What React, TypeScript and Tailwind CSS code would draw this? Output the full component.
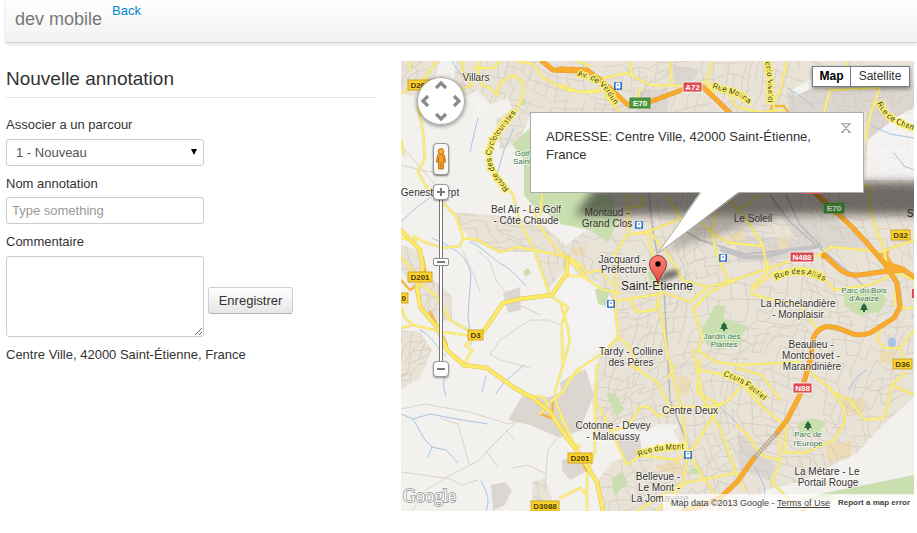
import React from "react";

const SANS = '"Liberation Sans", Arial, sans-serif';

/* ---------- map data ---------- */

// Small residential streets: a warped grid with gaps.
function buildStreets(step: number, seed: number): string {
  let s = seed;
  const rnd = () => {
    s = (s * 16807) % 2147483647;
    return s / 2147483647;
  };
  const pts: number[][][] = [];
  for (let j = 0; j * step < 470; j++) {
    const row: number[][] = [];
    for (let i = 0; i * step < 540; i++) {
      const x = 390 + i * step;
      const y = 50 + j * step;
      row.push([
        x + 14 * Math.sin(y / 37) + 7 * Math.sin(x / 19 + y / 50) + (rnd() - 0.5) * step * 0.7,
        y + 14 * Math.sin(x / 43) + 7 * Math.cos(y / 17 + x / 40) + (rnd() - 0.5) * step * 0.7,
      ]);
    }
    pts.push(row);
  }
  let d = "";
  const seg = (a: number[], b: number[]) => {
    d += `M${a[0].toFixed(1)} ${a[1].toFixed(1)}L${b[0].toFixed(1)} ${b[1].toFixed(1)}`;
  };
  for (let j = 0; j < pts.length - 1; j++) {
    for (let i = 0; i < pts[j].length - 1; i++) {
      if (rnd() < 0.66) seg(pts[j][i], pts[j][i + 1]);
      if (rnd() < 0.66) seg(pts[j][i], pts[j + 1][i]);
    }
  }
  return d;
}

const STREETS = buildStreets(10, 77);

const URBAN = [
  "M456 61L914 61L914 397L880 428L858 452L800 482L765 490L740 511L605 511L598 480L612 462L640 452L660 440L680 425L660 424L640 432L625 420L600 440L592 400L598 360L618 335L612 300L596 282L578 276L560 250L600 220L560 190L530 115L520 140L500 150L496 120L512 108L508 98L490 104L478 90L462 98L454 84Z",
  "M401 245L418 250L426 275L440 285L452 296L452 320L430 322L414 290L401 270Z",
  "M452 212L500 216L540 222L565 245L566 268L548 290L534 252L500 252L470 240Z",
  "M401 61L440 61L432 90L410 96L401 90Z",
  "M401 330L420 332L432 350L420 378L401 390Z",
  "M533 482L545 478L552 500L540 511L532 500Z",
];

const INDUSTRY = [
  "M503 293L520 287L521 310L508 313Z",
  "M508 420L522 396L545 398L570 390L580 400L582 430L560 438L530 425Z",
  "M491 485L505 482L512 490L505 505L493 511Z",
  "M560 382L585 368L594 395L582 425L562 405Z",
  "M612 435L640 438L642 452L627 463Z",
  "M640 91L668 88L668 112L638 112Z",
  "M674 65L700 70L690 86L674 88Z",
  "M786 92L830 90L850 78L914 84L914 108L895 118L868 140L866 112L790 112Z",
  "M780 215L835 218L870 245L850 250L800 244Z",
  "M737 235L800 240L820 255L760 262L737 262Z",
  "M737 430L760 455L776 466L770 480L740 470Z",
  "M562 460L580 455L585 472L570 480L562 470Z",
];

const PARKS = [
  "M512 144L530 128L530 112L560 112L600 205L580 225L560 222L532 205L524 195L524 160Z",
  "M560 195L610 195L618 220L608 242L590 230L560 224Z",
  "M595 289L610 288L606 306L598 304Z",
  "M648 272L660 268L664 285L650 286Z",
  "M702 330L715 305L725 306L724 318L736 322L744 330L740 345L720 350L706 344Z",
  "M843 292L880 288L887 300L880 312L858 315L845 306Z",
  "M607 395L615 392L624 410L616 416Z",
  "M612 478L622 472L628 482L614 496Z",
  "M797 423L812 418L826 422L818 434L800 434Z",
  "M820 494L914 475L914 498L800 500Z",
  "M737 322L750 328L737 336Z",
  "M523 272L528 268L531 273L526 277Z",
  "M520 102L526 98L526 104L522 106Z",
  "M690 468L700 468L698 474L688 474Z",
];

const PALE = [
  "M562 278L592 282L612 298L612 330L592 352L574 348L562 330Z",
  "M868 140L895 118L914 108L914 180L866 180Z",
  "M792 90L812 78L818 84L796 96Z",
  "M640 432L672 428L680 445L650 450Z",
  "M576 355L590 365L580 372Z",
  "M474 100L484 98L486 112L478 118Z",
];

const SAND = [
  "M572 248L584 246L586 254L574 256Z",
  "M728 236L740 230L746 238L732 244Z",
  "M778 240L786 236L788 250L780 250Z",
  "M656 466L680 460L684 476L658 470Z",
  "M680 375L692 380L688 396L678 392Z",
  "M840 400L865 398L862 416L846 412Z",
  "M826 445L852 440L850 458L828 462Z",
  "M880 350L896 352L892 364L880 362Z",
];

const WATER = [
  "M452 61C454 66 458 70 462 76",
  "M478 118L474 134L470 152M514 128L504 150L496 178",
  "M401 222C415 208 430 196 438 194",
  "M432 238C455 248 468 256 471 275L468 315L471 345",
  "M470 242C485 248 492 260 505 266C514 272 518 278 526 286",
  "M420 330C432 335 438 350 446 356M446 373C442 382 444 390 446 396",
  "M524 365C512 376 502 382 496 394M486 376L482 392",
  "M401 414L413 419L430 414L462 420L488 424",
  "M413 419L425 440L432 447L446 450L458 463M432 447L428 457",
  "M481 481C488 494 490 500 486 511",
  "M788 88L800 96L815 108M872 126L890 134L914 138M894 153L904 166L914 170",
  "M755 467L765 488L764 500M848 390L858 376L866 370",
  "M720 407L737 423",
];

const LANES = [
  "M401 409L425 404L458 410L470 412L508 424L525 420",
  "M533 405L488 450L478 461L445 478L426 490L412 511",
  "M440 418L458 424L469 464M486 451L497 466M506 430L514 439M401 472L430 476L450 479L462 485L478 480",
  "M512 468L528 465L546 474L548 450L557 438M546 474L545 490",
  "M490 354L500 340L530 320L548 320L562 326M490 354L500 360L530 368",
  "M478 250L490 262L497 282L508 295M462 250L474 275L480 292",
  "M512 308L522 306L540 315M401 165L430 172L450 165M405 150L418 165L440 190",
  "M572 440L577 452L584 470L590 474",
];

const RAIL = [
  "M647 170L650 205L653 232L664 290L670 400L690 450",
  "M680 228L700 240L745 254L790 250L818 245",
  "M770 195L790 222L815 244L840 265L880 300",
  "M786 195L800 225L822 247",
];

const STREAM_COLOR = "#a5c3e6";

const YELLOW = [
  "M437 61L427 75L420 92L418 108L423 132L425 158L418 172L425 185L438 198L455 215L460 227L463 238L478 240L500 252L517 247L533 250L550 253L567 258L580 267",
  "M424 78L402 93M401 140L404 155M411 61L410 70",
  "M463 61L462 72L473 85L443 95L422 102M480 61L478 72L482 85L490 88L497 95L500 83L513 75L523 82L523 95L517 110L500 128L489 148L492 165L503 183",
  "M473 68L493 68L500 61M517 61L533 64L543 78L567 90L580 92L600 92",
  "M503 183L513 195L518 215L520 223L533 247L550 295",
  "M401 238L416 241L414 236L424 242L443 248L460 246L463 238",
  "M401 257L410 267L420 283L437 297L450 320L473 333",
  "M401 307L405 318L413 325L401 328M413 325L443 332L473 336",
  "M472 340L465 345L472 350L465 363M465 363L447 350",
  "M552 297L568 307L562 323L562 343L563 365L555 392L557 405L573 442L580 447",
  "M580 370L570 378L563 392L550 402M523 395L543 397L548 405L540 414",
  "M533 210L540 227L560 253M567 276L582 276L603 290L620 293M560 252L577 262L587 273L600 270L613 285M542 195L540 215",
  "M567 258L587 278M563 365L570 340L567 325L561 305",
  "M617 292L615 253L627 235L647 232L683 218M628 195L628 232M628 208L642 206L640 195M668 195L680 218",
  "M615 292L615 300L618 337L603 353L577 370L560 395M618 337L628 345L640 370M630 300L637 312L655 310L660 295",
  "M647 233L653 257L660 293M658 300L664 330L667 353L673 375L682 412L688 452L683 485L657 511M650 232L667 253L683 280L707 287L740 278",
  "M615 301L660 294M662 292L690 302L707 288",
  "M700 222L712 233L730 243L763 246M716 210L712 235L717 255L728 280M730 200L738 210L750 225L763 246L767 270M738 210L760 195",
  "M693 308L702 337L698 350L716 362L737 365L800 362",
  "M694 308L710 292L740 278L787 262L820 255L830 247L854 249L880 252L914 240",
  "M767 262L769 270L752 287L752 294L770 299L800 305L817 328",
  "M752 290L775 272L804 268L824 277L834 290L870 285L897 273L914 280",
  "M862 185L870 186L870 210L884 250L888 270",
  "M894 318L882 326L877 340L884 348L900 348L914 330M900 308L914 308M900 348L904 360M896 285L895 305",
  "M597 365L595 402L595 452L587 475L587 511M560 415L583 462M560 498L580 488L587 495",
  "M595 402L602 412L610 428L627 465L640 455L677 460L690 450M610 430L627 428L640 407L648 407L660 417L673 407L707 407L725 403L740 388",
  "M630 365L657 382L670 408M675 365L668 378M693 350L703 398L720 428L737 475L745 490",
  "M690 453L720 405M688 453L717 498M637 511L683 483L737 473M700 360L697 392L720 405",
  "M700 370L737 378L757 402L787 428L784 452L804 453L834 440L845 422L844 408L830 388L809 372",
  "M737 425L750 438L760 455L780 460M780 400L762 375L737 368M780 435L780 462L772 482L794 505",
  "M832 392L850 400L865 420L884 418L892 385L914 395M892 385L905 372",
  "M787 61L780 92L774 102M770 61L774 108M740 108L760 112L784 110M737 108L728 92L722 86",
  "M880 88L870 115L866 140M847 61L848 70M824 112L830 90L877 88",
  "M603 78L627 73L650 85L687 86M630 61L632 75M637 105L640 88M670 61L672 85M703 82L718 90M712 61L707 82L714 95",
  "M560 85L580 92L600 90M605 96L620 112M577 61L590 66",
];

const MAIN_YELLOW = [
  "M473 335L483 332L503 303L520 299L552 295L567 273L567 258",
  "M401 230L420 250L423 267L417 287L420 307L437 327L447 350L463 365L487 368L513 387L533 398L550 412L567 438L580 455L597 482L603 511",
];

const ORANGE = [
  "M542 61L553 70L580 71L560 69L587 70L603 82L615 93L628 105L647 103L687 88L703 87L727 110L815 193L837 213L852 227L867 243L884 263L897 283L900 307L894 318L870 333C850 340 845 325 825 327C808 332 814 350 809 365L800 395L787 420L777 433",
  "M824 255L837 267C850 280 865 274 880 272L904 270L914 277M884 263L904 270",
  "M754 458L737 482L720 498L700 506L683 511",
];

const AMBER = [
  "M401 280L410 290L416 286M423 258L426 275M430 312L440 330L447 345M540 414L552 418L553 403",
  "M880 252L890 262L884 272M886 254L892 264L904 268M878 258L888 252M770 112L772 106L784 106L788 112M580 455L586 470L594 476M802 511L808 506L818 508",
];

type Shield = { x: number; y: number; w: number; t: string; kind: "d" | "n" | "e" };
const SHIELDS: Shield[] = [
  { x: 408, y: 80, w: 24, t: "D201", kind: "d" },
  { x: 408, y: 272, w: 24, t: "D201", kind: "d" },
  { x: 389, y: 293, w: 19, t: "D10", kind: "d" },
  { x: 468, y: 330, w: 15, t: "D3", kind: "d" },
  { x: 568, y: 453, w: 24, t: "D201", kind: "d" },
  { x: 531, y: 501, w: 28, t: "D3088", kind: "d" },
  { x: 891, y: 230, w: 19, t: "D32", kind: "d" },
  { x: 893, y: 359, w: 19, t: "D36", kind: "d" },
  { x: 683, y: 82, w: 19, t: "A72", kind: "n" },
  { x: 790, y: 252, w: 24, t: "N488", kind: "n" },
  { x: 793, y: 383, w: 19, t: "N88", kind: "n" },
  { x: 630, y: 98, w: 20, t: "E70", kind: "e" },
  { x: 824, y: 203, w: 20, t: "E70", kind: "e" },
];
const SHIELD_FILL = { d: "#fbd32f", n: "#dc4b52", e: "#4c9a3c" };
const SHIELD_EDGE = { d: "#c99a10", n: "#ffffff", e: "#2f7a26" };

const PLACES: [number, number, string][] = [
  [476, 81, "Villars"],
  [430, 196, "Genest-Lerpt"],
  [526, 213, "Bel Air - Le Golf"],
  [526, 224, "- Côte Chaude"],
  [607, 216, "Montaud -"],
  [607, 227, "Grand Clos"],
  [753, 222, "Le Soleil"],
  [622, 263, "Jacquard -"],
  [624, 273, "Préfecture"],
  [631, 355, "Tardy - Colline"],
  [631, 366, "des Pères"],
  [798, 307, "La Richelandière"],
  [798, 318, "- Monplaisir"],
  [811, 348, "Beaulieu -"],
  [811, 359, "Montchovet -"],
  [812, 370, "Marandinière"],
  [690, 414, "Centre Deux"],
  [613, 429, "Cotonne - Devey"],
  [613, 440, "- Malacussy"],
  [658, 480, "Bellevue -"],
  [659, 491, "Le Mont -"],
  [660, 502, "La Jomayère"],
  [827, 475, "La Métare - Le"],
  [828, 486, "Portail Rouge"],
];

const GREEN_LABELS: [number, number, string][] = [
  [522, 156, "Golf"],
  [522, 164, "Saint"],
  [722, 339, "Jardin des"],
  [724, 347, "Plantes"],
  [864, 293, "Parc du Bois"],
  [864, 301, "d'Avaize"],
  [808, 437, "Parc de"],
  [808, 446, "l'Europe"],
];

// Names that follow the line of their street.
const STREET_NAMES = [
  { id: "cyclotouristes", d: "M509 189L500 178C491 168 488 152 496 140C504 126 514 118 522 104", t: "Route des Cyclotouristes", size: 8 },
  { id: "verdun", d: "M577 76C592 78 602 85 608 95L620 112", t: "Av. de Verdun", size: 8 },
  { id: "molina", d: "M712 88L738 96L760 112", t: "Rue Molina", size: 8 },
  { id: "vivaldi", d: "M765 62L768 80L768 112", t: "onio Vivaldi", size: 8 },
  { id: "champ", d: "M877 103C884 118 892 126 930 134", t: "Rue de Cham", size: 8 },
  { id: "allies", d: "M776 280C790 272 806 270 834 286", t: "Rue des Alliés", size: 8 },
  { id: "fauriel", d: "M723 376C742 381 752 390 772 408", t: "Cours Fauriel", size: 8 },
  { id: "mont", d: "M639 457C652 450 668 449 694 449", t: "Rue du Mont", size: 8 },
];

const TREES = [
  [724, 327],
  [864, 308],
  [808, 426],
];
const STATIONS = [
  [618, 86],
  [639, 225],
  [723, 258],
  [611, 304],
  [688, 455],
];

function Paths({ list, ...rest }: { list: string[] } & React.SVGProps<SVGPathElement>) {
  return <path d={list.join("")} {...rest} />;
}

function MapCanvas() {
  const line = { fill: "none", strokeLinejoin: "round", strokeLinecap: "round" } as const;
  return (
    <svg
      className="absolute inset-0 h-full w-full"
      viewBox="401 61 513 450"
      preserveAspectRatio="xMinYMin slice"
      fontFamily={SANS}
      role="img"
      aria-label="Saint-Étienne"
    >
      <defs>
        <clipPath id="urban">
          <Paths list={URBAN} />
        </clipPath>
        <filter id="soft" x="-20%" y="-60%" width="140%" height="220%">
          <feGaussianBlur stdDeviation="5" />
        </filter>
        <filter id="soft2" x="-20%" y="-60%" width="140%" height="220%">
          <feGaussianBlur stdDeviation="2" />
        </filter>
        <linearGradient id="pin" x1="0" y1="0" x2="0" y2="1">
          <stop offset="0" stopColor="#ff8278" />
          <stop offset="1" stopColor="#e84a40" />
        </linearGradient>
      </defs>
      <rect x="401" y="61" width="513" height="450" fill="#f3f1ee" />
      <Paths list={URBAN} fill="#e9e2d7" />
      <Paths list={INDUSTRY} fill="#dcd6d0" />
      <Paths list={PALE} fill="#f4f3f1" />
      <Paths list={SAND} fill="#ecdcb4" />
      <path d={STREETS} clipPath="url(#urban)" fill="none" stroke="#d2c9bd" strokeWidth="0.7" />
      <Paths list={PALE} fill="#f4f3f1" fillOpacity="0.8" />
      <Paths list={PARKS} fill="#c9dfaf" />
      <Paths list={LANES} {...line} stroke="#d8d3cb" />
      <Paths list={WATER} {...line} stroke={STREAM_COLOR} />
      <ellipse cx="892" cy="343" rx="4" ry="6" fill={STREAM_COLOR} />
      <Paths list={RAIL} {...line} stroke="#b9b9bd" strokeWidth="1.5" />
      <path d="M722 250L745 257L764 257L790 250L816 247" {...line} stroke="#c3c3c6" strokeWidth="4" />
      <Paths list={AMBER} {...line} stroke="#f6b545" strokeWidth="2.5" />
      <Paths list={YELLOW} {...line} stroke="#e3d48c" strokeWidth="2.6" />
      <Paths list={YELLOW} {...line} stroke="#fdef74" strokeWidth="1.8" />
      <Paths list={MAIN_YELLOW} {...line} stroke="#dcc56a" strokeWidth="4.4" />
      <Paths list={MAIN_YELLOW} {...line} stroke="#fdea62" strokeWidth="3.4" />
      <Paths list={ORANGE} {...line} stroke="#d99a3c" strokeWidth="5" />
      <Paths list={ORANGE} {...line} stroke="#fbab2c" strokeWidth="4" />
      <path d="M777 433L754 458" fill="none" stroke="#b8ab90" strokeWidth="5" strokeDasharray="2 1" />
      <circle cx="824" cy="256" r="3" fill="#f3a02a" />

      {/* shadow of the info window */}
      <path d="M600 182H930V215H574Z" fill="#000" fillOpacity="0.52" filter="url(#soft)" />
      <path d="M700 212L790 212L664 252Z" fill="#000" fillOpacity="0.25" filter="url(#soft)" />

      {STREET_NAMES.map((s) => (
        <g key={s.id}>
          <path id={s.id} d={s.d} fill="none" />
          <text fontSize={s.size} fill="#333" stroke="#fbf06e" strokeWidth="3" paintOrder="stroke" strokeLinejoin="round">
            <textPath href={`#${s.id}`}>{s.t}</textPath>
          </text>
        </g>
      ))}

      {STATIONS.map(([x, y]) => (
        <g key={`${x}-${y}`} transform={`translate(${x} ${y})`}>
          <rect x="-4" y="-4" width="8" height="8" rx="1" fill="#2f72cc" />
          <path d="M-2 -3h4v5h-4zM-2 3h1M1 3h1" fill="#fff" stroke="#fff" strokeWidth="0.8" />
          <path d="M-1 -1h2" stroke="#2f72cc" />
        </g>
      ))}
      {TREES.map(([x, y]) => (
        <path
          key={`${x}-${y}`}
          transform={`translate(${x} ${y})`}
          d="M0 -5L3 -1H2L4 2H1V4H-1V2H-4L-2 -1H-3Z"
          fill="#25663b"
        />
      ))}
      <path d="M804 192h19v2h-19zM912 289h2v9h-2z" fill="#dc4b52" />
      {SHIELDS.map((s) => (
        <g key={`${s.x}-${s.y}`}>
          <rect x={s.x} y={s.y} width={s.w} height="10" fill={SHIELD_FILL[s.kind]} stroke={SHIELD_EDGE[s.kind]} strokeWidth="0.8" />
          <text x={s.x + s.w / 2} y={s.y + 8} textAnchor="middle" fontSize="8" fontWeight="bold" fill={s.kind === "d" ? "#4a3a00" : "#fff"}>
            {s.t}
          </text>
        </g>
      ))}
      <path d="M824 203h20v10h-20z" fill="#000" fillOpacity="0.25" />
      <g textAnchor="middle" stroke="#fff" strokeOpacity="0.5" strokeWidth="2" paintOrder="stroke" strokeLinejoin="round">
        {GREEN_LABELS.map(([x, y, t]) => (
          <text key={t} x={x} y={y} fontSize="8" fill="#3b7a52">
            {t}
          </text>
        ))}
        {PLACES.map(([x, y, t]) => (
          <text key={t} x={x} y={y} fontSize="10" fill="#333" strokeOpacity={y > 200 && y < 228 && x > 600 ? 0 : 0.5}>
            {t}
          </text>
        ))}
        <text x="657" y="290" fontSize="12" fill="#222">
          Saint-Étienne
        </text>
        <text x="910" y="217" fontSize="10" fill="#222" strokeOpacity="0">
          S
        </text>
      </g>

      {/* pin and its shadow */}
      <path d="M658 283L664 273Q674 267 679 272Q678 278 666 280Z" fill="#000" fillOpacity="0.5" filter="url(#soft2)" />
      <path
        d="M658 284C657 276 649.500 271 649.500 264A8.500 8.500 0 0 1 666.500 264C666.500 271 659 276 658 284Z"
        fill="url(#pin)"
        stroke="#8c2a24"
        strokeWidth="0.9"
      />
      <circle cx="658" cy="264" r="2.700" fill="#000" />

      <text x="403" y="502" fontSize="18" fontFamily='"Liberation Serif", serif' fill="#fff" stroke="#8d8d8d" strokeWidth="1.400" paintOrder="stroke">
        Google
      </text>
    </svg>
  );
}

/* ---------- map controls ---------- */

const ARROWS = [
  { label: "Haut", cls: "left-[15px] top-0", d: "M3 10L8 5L13 10" },
  { label: "Gauche", cls: "left-0 top-[15px]", d: "M10 3L5 8L10 13" },
  { label: "Droite", cls: "right-0 top-[15px]", d: "M6 3L11 8L6 13" },
  { label: "Bas", cls: "left-[15px] bottom-0", d: "M3 6L8 11L13 6" },
];

function PanControl() {
  return (
    <div className="absolute left-4 top-4 h-12 w-12 rounded-full border border-[#a9a9a9] bg-white/95 shadow-[0_1px_4px_rgba(0,0,0,0.5)]">
      {ARROWS.map((a) => (
        <button key={a.label} type="button" aria-label={a.label} className={`absolute h-4 w-4 ${a.cls}`}>
          <svg viewBox="0 0 16 16" className="block h-4 w-4">
            <path d={a.d} fill="none" stroke="#8a8a8a" strokeWidth="3.200" />
          </svg>
        </button>
      ))}
    </div>
  );
}

function Pegman() {
  return (
    <button
      type="button"
      aria-label="Street View"
      className="absolute left-8 top-[82px] flex h-8 w-4 items-center justify-center rounded-sm border border-[#999] bg-[#f7f7f7] shadow-[0_1px_2px_rgba(0,0,0,0.5)]"
    >
      <svg viewBox="0 0 12 24" className="h-6 w-3">
        <path d="M2.500 8Q6 6.500 9.500 8L10.500 15H8.800L8.300 22H3.700L3.200 15H1.500Z" fill="#f0a02a" stroke="#b5660a" strokeWidth="0.8" />
        <path d="M6 15V22M3.500 10V15M8.500 10V15" stroke="#b5660a" strokeWidth="0.7" />
        <circle cx="6" cy="4.500" r="2.900" fill="#f4ab38" stroke="#b5660a" strokeWidth="0.8" />
      </svg>
    </button>
  );
}

function ZoomControl() {
  const btn =
    "relative flex h-4 w-4 items-center justify-center rounded-sm border border-[#999] bg-white shadow-[0_1px_2px_rgba(0,0,0,0.4)]";
  return (
    <div className="absolute left-8 top-[123px] flex w-4 flex-col items-center">
      <button type="button" aria-label="Zoom avant" className={btn}>
        <svg viewBox="0 0 10 10" className="h-2.5 w-2.5">
          <path d="M5 1V9M1 5H9" stroke="#777" strokeWidth="2" />
        </svg>
      </button>
      <input
        type="range"
        aria-label="Zoom"
        min={0}
        max={21}
        defaultValue={13}
        className="m-0 h-[161px] w-4 appearance-none bg-[linear-gradient(to_right,transparent_6px,#777_6px,#777_7px,#fff_7px,#fff_9px,#777_9px,#777_10px,transparent_10px)] [direction:rtl] [writing-mode:vertical-lr] [&::-webkit-slider-thumb]:h-2 [&::-webkit-slider-thumb]:w-4 [&::-webkit-slider-thumb]:appearance-none [&::-webkit-slider-thumb]:rounded-[2px] [&::-webkit-slider-thumb]:border [&::-webkit-slider-thumb]:border-[#888] [&::-webkit-slider-thumb]:bg-[linear-gradient(#777,#777)] [&::-webkit-slider-thumb]:bg-[length:8px_2px] [&::-webkit-slider-thumb]:bg-center [&::-webkit-slider-thumb]:bg-no-repeat [&::-webkit-slider-thumb]:bg-white"
      />
      <button type="button" aria-label="Zoom arrière" className={btn}>
        <svg viewBox="0 0 10 10" className="h-2.5 w-2.5">
          <path d="M1 5H9" stroke="#777" strokeWidth="2" />
        </svg>
      </button>
    </div>
  );
}

function InfoWindow() {
  return (
    <div className="absolute left-[129px] top-[51px] h-[81px] w-[334px] border border-[#ababab] bg-white px-[15px] py-[15px]">
      <p className="w-[270px] text-[13px] leading-[18px]">ADRESSE: Centre Ville, 42000 Saint-Étienne, France</p>
      <button type="button" aria-label="Fermer" className="absolute right-3 top-2.5 h-2.5 w-2.5">
        <svg viewBox="0 0 10 10" className="block h-2.5 w-2.5">
          <path d="M1.500 1L8.500 9M8.500 1L1.500 9M0 0.500H10M0 9.500H3M7 9.500H10" stroke="#aaa" strokeWidth="1.300" />
        </svg>
      </button>
      <svg viewBox="0 0 86 63" className="pointer-events-none absolute left-[126px] top-[78px] h-[63px] w-[86px]">
        <path d="M44 0L1 62L83 0Z" fill="#fff" />
        <path d="M44 1.500L1 62L83 1.500" fill="none" stroke="#ababab" />
      </svg>
    </div>
  );
}

function MapPanel() {
  return (
    <section aria-label="Carte" className="relative h-[450px] min-w-0 flex-1 overflow-hidden">
      <MapCanvas />
      <PanControl />
      <Pegman />
      <ZoomControl />
      <div className="absolute right-1 top-[5px] flex border border-[#717b87] bg-white text-[12px] leading-[19px] shadow-[0_2px_4px_rgba(0,0,0,0.4)]">
        <button type="button" className="w-[38px] border-r border-[#717b87] text-center font-bold text-black">
          Map
        </button>
        <button type="button" className="w-[58px] text-center">
          Satellite
        </button>
      </div>
      <InfoWindow />
      <footer className="absolute bottom-0 right-0 flex h-[17px] items-center bg-white/70 text-[9px] text-[#444]">
        <span className="pl-2">
          Map data ©2013 Google -{" "}
          <a href="#terms" className="underline">
            Terms of Use
          </a>
        </span>
        <a href="#report" className="ml-1 bg-white/60 px-1 text-[8px] font-bold leading-[15px]">
          Report a map error
        </a>
      </footer>
    </section>
  );
}

/* ---------- page ---------- */

const FIELD = "w-[198px] rounded-[3px] border border-[#ccc] bg-white text-[13px] leading-[18px]";

export default function App() {
  return (
    <div className="min-h-screen bg-white pl-1.5 font-['Liberation_Sans',Arial,sans-serif] text-[13px] leading-[18px] text-[#333]">
      <header className="flex h-[43px] items-start gap-2.5 border-b border-[#d4d4d4] bg-linear-to-b from-white to-[#f2f2f2] pl-[9px] shadow-[0_1px_4px_rgba(0,0,0,0.15)]">
        <span className="pt-[9px] text-[18px] leading-5 text-[#777]">dev mobile</span>
        <a href="#back" className="pt-0.5 text-[#0088cc]">
          Back
        </a>
      </header>
      <main className="flex gap-[25px] pr-[3px] pt-[18px]">
        <form className="w-[370px] shrink-0" onSubmit={(e) => e.preventDefault()}>
          <h1 className="mb-[18px] h-[37px] border-b border-[#e5e5e5] text-[19px] leading-9">Nouvelle annotation</h1>
          <label htmlFor="parcour" className="mb-[5px] block">
            Associer a un parcour
          </label>
          <div className="relative mb-[9px] w-[198px]">
            <select id="parcour" className={`${FIELD} block h-[27px] appearance-none pl-[9px] text-[#555]`}>
              <option>1 - Nouveau</option>
            </select>
            <svg viewBox="0 0 6 6" className="pointer-events-none absolute right-[7px] top-2.5 h-1.5 w-1.5">
              <path d="M0 0H6L3 6Z" fill="#000" />
            </svg>
          </div>
          <label htmlFor="nom" className="mb-[4px] block">
            Nom annotation
          </label>
          <input
            id="nom"
            type="text"
            placeholder="Type something"
            className={`${FIELD} mb-[9px] block h-[27px] px-[5px] placeholder:text-[#999]`}
          />
          <label htmlFor="commentaire" className="mb-[5px] block">
            Commentaire
          </label>
          <div className="mb-[9px] flex items-end gap-1">
            <textarea id="commentaire" className={`${FIELD} block h-[81px] resize px-[5px] py-1`} />
            <button
              type="submit"
              className="mb-[23px] h-[27px] w-[85px] rounded-[3px] border border-[#d0d0d0] border-b-[#b3b3b3] bg-linear-to-b from-white to-[#e6e6e6] text-[13px]"
            >
              Enregistrer
            </button>
          </div>
          <p>Centre Ville, 42000 Saint-Étienne, France</p>
        </form>
        <MapPanel />
      </main>
    </div>
  );
}
